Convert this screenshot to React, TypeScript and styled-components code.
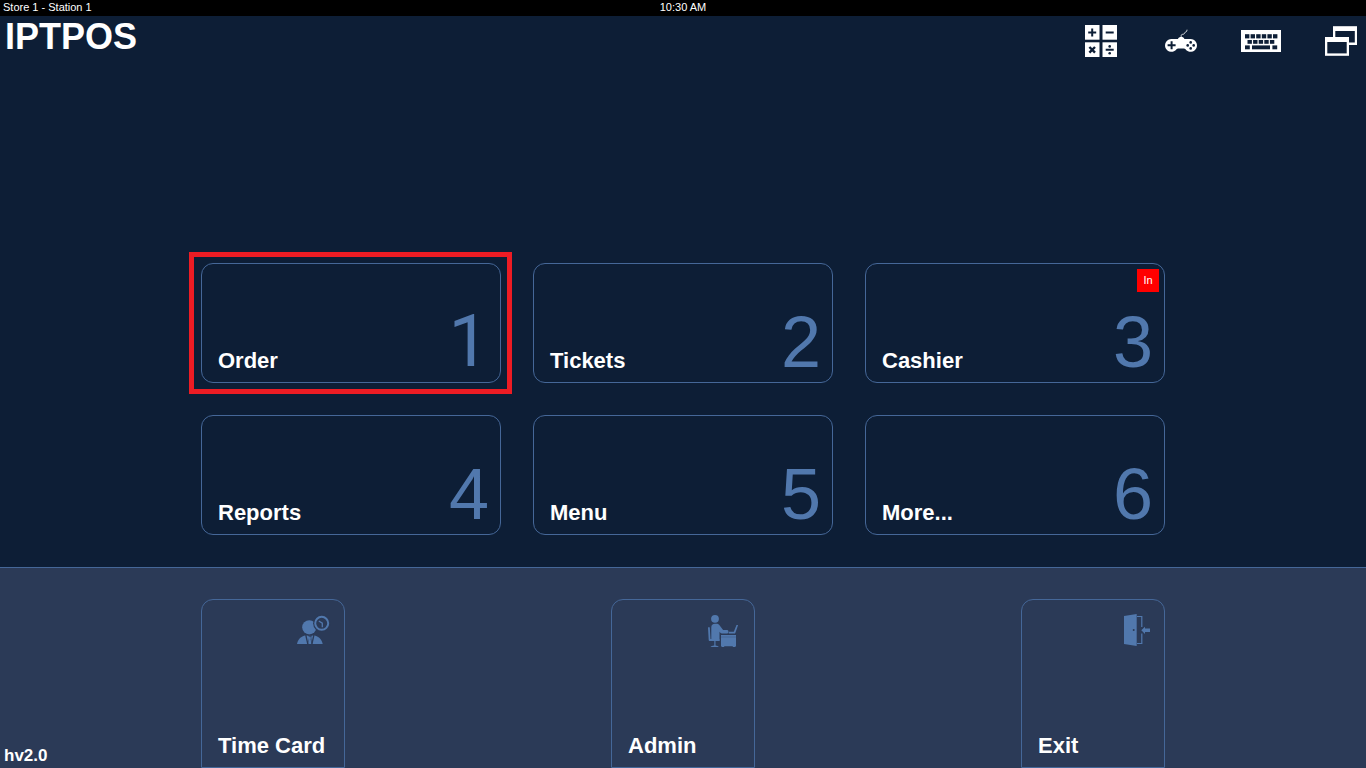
import React from "react";
import styled, { createGlobalStyle, css } from "styled-components";

const color = {
  page: "#0d1e36",
  panel: "#2b3a57",
  line: "#456798",
  accent: "#5178ad",
  text: "#ffffff",
  highlight: "#ed1c24",
  alert: "#ff0000",
};

const GlobalStyle = createGlobalStyle`
  *, *::before, *::after { box-sizing: border-box; }
  body {
    margin: 0;
    background: ${color.page};
    color: ${color.text};
    font-family: "Liberation Sans", Arial, Helvetica, sans-serif;
  }
  button {
    margin: 0;
    font: inherit;
    color: inherit;
    background: none;
    cursor: pointer;
  }
`;

const Screen = styled.div`
  display: flex;
  flex-direction: column;
  min-height: 100vh;
`;

const StatusBar = styled.div`
  display: grid;
  grid-template-columns: 1fr auto 1fr;
  height: 16px;
  padding: 0 3px;
  background: #000;
  font-size: 11px;
  line-height: 15px;
`;

const Header = styled.header`
  display: flex;
  justify-content: space-between;
  align-items: flex-start;
`;

const Brand = styled.h1`
  margin: 0;
  padding-left: 5px;
  font-size: 36px;
  line-height: 42px;
  font-weight: 700;
`;

const Tools = styled.nav`
  display: flex;
  gap: 30px;
`;

const ToolButton = styled.button`
  display: grid;
  place-items: center;
  width: 50px;
  height: 50px;
  padding: 0;
  border: 0;
`;

const Main = styled.main`
  flex: 1;
  display: flex;
  flex-direction: column;
  justify-content: flex-end;
  align-items: center;
  padding: 32px 16px;
`;

const TileGrid = styled.div`
  display: grid;
  grid-template-columns: repeat(3, minmax(0, 1fr));
  gap: 32px;
  width: 100%;
  max-width: 964px;
`;

const cardBase = css`
  border: 1px solid ${color.line};
  display: flex;
  text-align: left;
`;

const Tile = styled.button<{ $active?: boolean }>`
  ${cardBase}
  position: relative;
  height: 120px;
  padding: 0 11px 7px 16px;
  border-radius: 12px;
  justify-content: space-between;
  align-items: flex-end;
  ${({ $active }) =>
    $active &&
    css`
      &::after {
        content: "";
        position: absolute;
        inset: -12px -12px -12px -13px;
        border: 5px solid ${color.highlight};
      }
    `}
`;

const Label = styled.span`
  font-size: 22px;
  line-height: 28px;
  font-weight: 700;
`;

/* Roboto's figure one has no foot, unlike the one in Liberation Sans. */
const TileNumber = styled.span<{ $footless?: boolean }>`
  color: ${color.accent};
  font-family: ${({ $footless }) =>
    $footless ? "Roboto, sans-serif" : "inherit"};
  font-size: 72px;
  line-height: 66px;
`;

const Badge = styled.span`
  position: absolute;
  top: 5px;
  right: 5px;
  width: 22px;
  height: 23px;
  background: ${color.alert};
  font-size: 11px;
  line-height: 23px;
  text-align: center;
`;

const Footer = styled.footer`
  display: grid;
  grid-template-columns: 1fr minmax(0, 964px) 1fr;
  padding-top: 31px;
  border-top: 1px solid ${color.line};
  background: ${color.panel};
`;

const Version = styled.span`
  align-self: end;
  padding: 0 0 2px 4px;
  font-size: 17px;
  line-height: 20px;
  font-weight: 700;
`;

const FooterActions = styled.div`
  display: flex;
  justify-content: space-between;
`;

const FooterCard = styled.button`
  ${cardBase}
  flex-direction: column;
  justify-content: space-between;
  width: 144px;
  height: 169px;
  padding: 14px 15px 7px 16px;
  border-radius: 12px 12px 0 0;
`;

const CardIcon = styled.svg`
  align-self: flex-end;
  width: 32px;
  height: 32px;
  overflow: visible;
`;

const CalculatorIcon = () => (
  <svg width="32" height="32" viewBox="0 0 32 32" aria-hidden="true">
    <g fill="#fff">
      <rect width="14.5" height="14.7" />
      <rect x="17.5" width="14.5" height="14.7" />
      <rect y="17.3" width="14.5" height="14.7" />
      <rect x="17.5" y="17.3" width="14.5" height="14.7" />
    </g>
    <g stroke={color.page} strokeWidth="2" fill="none">
      <path d="M7.2 3.6v8M3.2 7.6h8M20.7 7.6h8M20.7 24.8h8" />
      <path d="M4.4 22l5.6 5.6M10 22l-5.6 5.6" strokeWidth="2.4" />
    </g>
    <circle cx="24.7" cy="21.4" r="1.3" fill={color.page} />
    <circle cx="24.7" cy="28.2" r="1.3" fill={color.page} />
  </svg>
);

const GamepadIcon = () => (
  <svg width="32" height="32" viewBox="0 0 32 32" aria-hidden="true">
    <path
      d="M16.2 13v-2.5c.3-1.5 1.6-1 2.6-1.4s.5-1.500 1.400-1.800 1.700-.6 1.800-2.600"
      fill="none"
      stroke="#fff"
      strokeWidth=".8"
    />
    <path
      d="M13 14c.4-1.400 1.600-1.900 3.200-1.900s2.800.5 3.200 1.900h6.100a6.400 6.400 0 1 1-5 10.300c-.5-.6-.9-.9-1.700-.9h-5.600c-.8 0-1.200.3-1.700.9A6.400 6.400 0 1 1 6.500 14z"
      fill="#fff"
    />
    <path d="M6.600 16.200v8M2.600 20.200h8" stroke={color.page} strokeWidth="2" />
    <g fill={color.page}>
      <circle cx="25.700" cy="17.400" r="1.300" />
      <circle cx="25.700" cy="23.400" r="1.300" />
      <circle cx="22.700" cy="20.400" r="1.300" />
      <circle cx="28.700" cy="20.400" r="1.300" />
    </g>
  </svg>
);

const KeyboardIcon = () => (
  <svg width="40" height="22" viewBox="0 0 40 22" aria-hidden="true">
    <rect width="40" height="22" fill="#fff" />
    <g fill={color.page}>
      {[4, 9.6, 15.2, 20.8, 26.4, 32].map((x) => (
        <rect key={x} x={x} y="4.200" width="4.400" height="4.200" />
      ))}
      {[6.5, 12.1, 17.7, 23.3, 28.9].map((x) => (
        <rect key={x} x={x} y="10" width="4.400" height="3.800" />
      ))}
      <rect x="4" y="15.400" width="4.800" height="3.900" />
      <rect x="11" y="15.400" width="18" height="3.900" />
      <rect x="31.400" y="15.400" width="4.800" height="3.900" />
    </g>
  </svg>
);

const WindowsIcon = () => (
  <svg width="32" height="32" viewBox="0 0 32 32" aria-hidden="true">
    <rect x="8" y="1.200" width="24" height="18.800" fill="#fff" />
    <rect x="10.300" y="6" width="19.500" height="11.500" fill={color.page} />
    <rect y="12" width="24" height="18.800" fill="#fff" />
    <rect x="2.300" y="17" width="19.400" height="11.400" fill={color.page} />
  </svg>
);

const TimeCardIcon = () => (
  <CardIcon viewBox="0 0 32 32" aria-hidden="true">
    <g fill={color.accent}>
      <circle cx="12.300" cy="13.300" r="7.100" />
      <path d="M0 30c.8-4.300 3.500-7.500 8-8.600h9.600c4.500 1.100 7.200 4.300 8.100 8.600z" />
    </g>
    <path
      d="M8.800 21l2 9M16.900 21l-2 9"
      stroke={color.panel}
      strokeWidth="1.300"
    />
    <path
      d="M10 20.800h5.700l-1.400 2.200 1 7h-1l-1.400-6-1.400 6h-.8l1.500-7z"
      fill={color.panel}
      opacity=".75"
    />
    <path
      d="M12.800 22.600l1.200 1.300-.7 1 .9 4.400-1.400.7-1.400-.7.900-4.400-.7-1z"
      fill={color.accent}
    />
    <circle cx="24.800" cy="9.300" r="8.700" fill={color.panel} />
    <circle
      cx="24.700"
      cy="9.300"
      r="6.500"
      fill="none"
      stroke={color.accent}
      strokeWidth="2"
    />
    <path
      d="M21.800 7l3.500 2.200v4"
      fill="none"
      stroke={color.accent}
      strokeWidth="1.300"
    />
  </CardIcon>
);

const AdminIcon = () => (
  <CardIcon viewBox="0 -1 32 32" aria-hidden="true">
    <g fill={color.accent}>
      <circle cx="8" cy="3.800" r="3.900" />
      <path d="M4.300 24V12.300c0-2.400 1.300-3.600 3.700-3.600h1.500c1.400 0 2.300.5 3 1.500l3.600 4.900h4.200c1.500 0 1.500 3.500 0 3.500h-5.200c-.9 0-1.500-.3-2-1l-.6-.8V26H4.300z" />
      <path d="M1 12.600c0-.6 1.700-.6 1.800 0l.7 11.400h8.900v2H2.800c-.7 0-1-.4-1.100-1z" />
      <path d="M7.300 26h1.200v4.400c1.700.1 2.900.500 3.300 1.600H3.500c.4-1.100 1.900-1.500 3.800-1.600z" />
      <path d="M21.700 16.700h5.100L29.500 10h1.600l-2.700 7.800c-.2.600-.5.800-1.100.8h-5.600z" />
      <path d="M14 20h15v11.200h-.6v.8h-2.600v-.8h-8.600v.8h-2.600v-.8H14z" />
    </g>
    <path d="M14 22h15" stroke={color.panel} strokeWidth=".5" opacity=".5" />
  </CardIcon>
);

const ExitIcon = () => (
  <CardIcon viewBox="0 0 32 32" aria-hidden="true">
    <path d="M7 2L19.700 0v32L7 30z" fill={color.accent} />
    <circle cx="16.700" cy="16" r="1" fill={color.panel} />
    <path
      d="M20 2.500h4.800V13M24.800 19.500v10H20"
      fill="none"
      stroke={color.accent}
      strokeWidth="1.200"
    />
    <path d="M24.300 16.300l3.700-3.600v1.900h5v3.500h-5v1.900z" fill={color.accent} />
  </CardIcon>
);

const tools = [
  { name: "Calculator", Icon: CalculatorIcon },
  { name: "Games", Icon: GamepadIcon },
  { name: "Keyboard", Icon: KeyboardIcon },
  { name: "Windows", Icon: WindowsIcon },
];

const tiles: { label: string; active?: boolean; badge?: string }[] = [
  { label: "Order", active: true },
  { label: "Tickets" },
  { label: "Cashier", badge: "In" },
  { label: "Reports" },
  { label: "Menu" },
  { label: "More..." },
];

const actions = [
  { label: "Time Card", Icon: TimeCardIcon },
  { label: "Admin", Icon: AdminIcon },
  { label: "Exit", Icon: ExitIcon },
];

export default function App() {
  return (
    <>
      <GlobalStyle />
      <Screen>
        <StatusBar>
          <span>Store 1 - Station 1</span>
          <span>10:30 AM</span>
        </StatusBar>
        <Header>
          <Brand>IPTPOS</Brand>
          <Tools>
            {tools.map(({ name, Icon }) => (
              <ToolButton key={name} type="button" aria-label={name}>
                <Icon />
              </ToolButton>
            ))}
          </Tools>
        </Header>
        <Main>
          <TileGrid>
            {tiles.map(({ label, active, badge }, i) => (
              <Tile key={label} type="button" $active={active}>
                <Label>{label}</Label>
                <TileNumber $footless={i === 0}>{i + 1}</TileNumber>
                {badge && <Badge>{badge}</Badge>}
              </Tile>
            ))}
          </TileGrid>
        </Main>
        <Footer>
          <Version>hv2.0</Version>
          <FooterActions>
            {actions.map(({ label, Icon }) => (
              <FooterCard key={label} type="button">
                <Icon />
                <Label>{label}</Label>
              </FooterCard>
            ))}
          </FooterActions>
        </Footer>
      </Screen>
    </>
  );
}
